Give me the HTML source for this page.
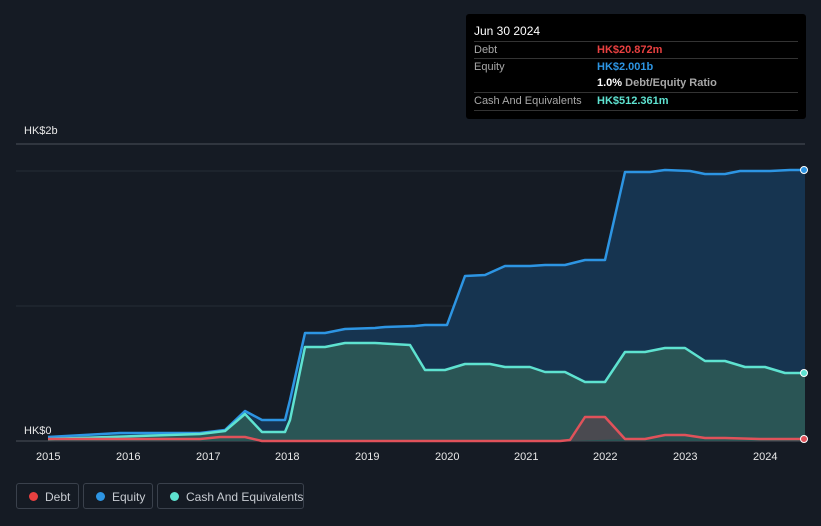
<!DOCTYPE html>
<html><head><meta charset="utf-8"><style>
body{margin:0;width:821px;height:526px;background:#151b24;font-family:"Liberation Sans",sans-serif;overflow:hidden;position:relative}
.tt{position:absolute;left:466px;top:14px;width:340px;height:105px;background:#000;border-radius:3px}
.tt .h{position:absolute;left:8px;top:10px;color:#fff;font-size:12px}
.row{position:absolute;left:8px;width:324px;border-top:1px solid #333;font-size:11px;color:#a8a8a8;height:17px;line-height:17px}
.row span{position:absolute;left:123px;font-weight:bold}
.lg{position:absolute;top:483px;height:26px;border:1px solid #3a414c;border-radius:3px;color:#c8ccd2;font-size:12px;line-height:26px;box-sizing:border-box;white-space:nowrap}
.lg i{position:absolute;left:12px;top:8px;width:9px;height:9px;border-radius:50%}
.ax{position:absolute;top:451px;color:#e8e8e8;font-size:11px}
</style></head><body>
<svg width="821" height="526" style="position:absolute;left:0;top:0">
<line x1="16" y1="144" x2="805" y2="144" stroke="#4a505a"/>
<line x1="16" y1="171" x2="805" y2="171" stroke="#252c36"/>
<line x1="16" y1="306" x2="805" y2="306" stroke="#252c36"/>
<line x1="16" y1="441" x2="805" y2="441" stroke="#4a505a"/>
<polygon fill="#163450" points="48,437 120,433 200,433 225,430 245,411 262,420 285,420 290,400 305,333 325,333 345,329 375,328 385,327 415,326 425,325 447,325 465,276 485,275 505,266 530,266 545,265 565,265 585,260 605,260 625,172 650,172 665,170 690,171 705,174 725,174 740,171 770,171 790,170 805,170 805,441 48,441"/>
<polygon fill="#2a5555" points="48,439 200,434 225,431 245,414 262,432 285,432 290,420 305,347 325,347 345,343 375,343 410,345 425,370 445,370 465,364 490,364 505,367 530,367 545,372 565,372 585,382 605,382 625,352 645,352 665,348 685,348 705,361 725,361 745,367 765,367 785,373 805,373 805,441 48,441"/>
<polygon fill="#4a4a50" points="570,440 585,417 605,417 625,439 570,441"/>
<g fill="none" stroke-width="2.5" stroke-linejoin="round">
<polyline stroke="#2d95e3" points="48,437 120,433 200,433 225,430 245,411 262,420 285,420 290,400 305,333 325,333 345,329 375,328 385,327 415,326 425,325 447,325 465,276 485,275 505,266 530,266 545,265 565,265 585,260 605,260 625,172 650,172 665,170 690,171 705,174 725,174 740,171 770,171 790,170 805,170"/>
<polyline stroke="#5ee2d0" points="48,439 200,434 225,431 245,414 262,432 285,432 290,420 305,347 325,347 345,343 375,343 410,345 425,370 445,370 465,364 490,364 505,367 530,367 545,372 565,372 585,382 605,382 625,352 645,352 665,348 685,348 705,361 725,361 745,367 765,367 785,373 805,373"/>
<polyline stroke="#e0525a" points="48,439 200,439 220,437 245,437 262,441 560,441 570,440 585,417 605,417 625,439 645,439 665,435 685,435 705,438 725,438 760,439 805,439"/>
</g>
<circle cx="804" cy="170" r="3.5" fill="#2d95e3" stroke="#fff" stroke-width="1"/>
<circle cx="804" cy="373" r="3.5" fill="#5ee2d0" stroke="#fff" stroke-width="1"/>
<circle cx="804" cy="439" r="3.5" fill="#e0525a" stroke="#fff" stroke-width="1"/>
</svg>
<div style="position:absolute;left:24px;top:125px;color:#e8e8e8;font-size:11px">HK$2b</div>
<div style="position:absolute;left:24px;top:425px;color:#e8e8e8;font-size:11px">HK$0</div>
<div class="ax" style="left:36px">2015</div><div class="ax" style="left:116px">2016</div><div class="ax" style="left:196px">2017</div><div class="ax" style="left:275px">2018</div><div class="ax" style="left:355px">2019</div><div class="ax" style="left:435px">2020</div><div class="ax" style="left:514px">2021</div><div class="ax" style="left:593px">2022</div><div class="ax" style="left:673px">2023</div><div class="ax" style="left:753px">2024</div>
<div class="tt"><div class="h">Jun 30 2024</div>
<div class="row" style="top:27px">Debt<span style="color:#e84040">HK$20.872m</span></div>
<div class="row" style="top:44px">Equity<span style="color:#2d95e3">HK$2.001b</span></div>
<div class="row" style="top:61px;border-top:none"><span style="color:#fff">1.0% <b style="color:#a8a8a8">Debt/Equity Ratio</b></span></div>
<div class="row" style="top:78px;border-bottom:1px solid #333">Cash And Equivalents<span style="color:#5ee2d0">HK$512.361m</span></div>
</div>
<div class="lg" style="left:16px;width:63px"><i style="background:#e84040"></i><span style="position:absolute;left:28px">Debt</span></div>
<div class="lg" style="left:83px;width:70px"><i style="background:#2d95e3"></i><span style="position:absolute;left:28px">Equity</span></div>
<div class="lg" style="left:157px;width:147px"><i style="background:#5ee2d0"></i><span style="position:absolute;left:28px">Cash And Equivalents</span></div>
</body></html>
